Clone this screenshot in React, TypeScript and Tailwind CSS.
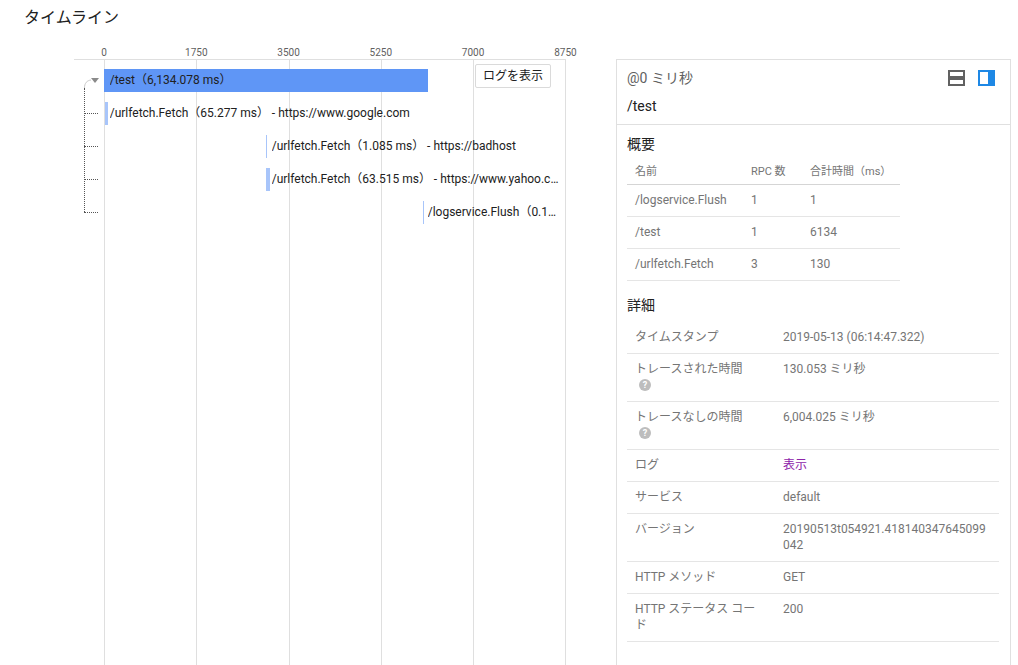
const font = "font-['Roboto','Noto_Sans_CJK_JP',sans-serif]";

const ticks = ["0", "1750", "3500", "5250", "7000", "8750"];

const spans = [
  { top: 69, left: 104, width: 324, bar: "bg-[#5f96f6]", labelLeft: 109.7, label: "/test（6,134.078 ms）", width2: 300 },
  { top: 102, left: 105, width: 3, bar: "bg-[#a8c5fa]", labelLeft: 109.7, label: "/urlfetch.Fetch（65.277 ms） - https://www.google.com", width2: 450 },
  { top: 135, left: 266, width: 1, bar: "bg-[#a8c5fa]", labelLeft: 271.7, label: "/urlfetch.Fetch（1.085 ms） - https://badhost", width2: 288 },
  { top: 168, left: 266, width: 4, bar: "bg-[#a8c5fa]", labelLeft: 271.7, label: "/urlfetch.Fetch（63.515 ms） - https://www.yahoo.com", width2: 290 },
  { top: 201, left: 423, width: 1, bar: "bg-[#a8c5fa]", labelLeft: 427.7, label: "/logservice.Flush（0.123 ms）", width2: 132 },
];

const summary = [
  ["/logservice.Flush", "1", "1"],
  ["/test", "1", "6134"],
  ["/urlfetch.Fetch", "3", "130"],
];

function Help() {
  return (
    <span className="my-[2px] ml-1 flex h-3 w-3 items-center justify-center rounded-full bg-[#bdbdbd] text-[9px] leading-none font-bold text-white">
      ?
    </span>
  );
}

function DetailRow({ name, help, children }: { name: string; help?: boolean; children: React.ReactNode }) {
  return (
    <div className="flex border-b border-[#e5e5e5] px-2 pt-[7px] pb-[8px] leading-4">
      <div className="w-[148px] pr-5 break-all text-[#757575]">
        {name}
        {help && <Help />}
      </div>
      <div className="w-[208px] break-all text-[#757575]">{children}</div>
    </div>
  );
}

export default function App() {
  return (
    <div className={`${font} relative h-[665px] w-[1018px] overflow-hidden bg-white text-xs text-[#212121]`}>
      <h1 className="pt-2 pl-6 text-base leading-5 text-[#212121]">タイムライン</h1>

      {/* Timeline chart */}
      <div className="absolute top-0 left-0 h-[665px] w-[600px]">
        {ticks.map((t, i) => (
          <div key={t}>
            <span className="absolute top-[47px] w-10 text-center text-[10px] leading-3 text-[#616161]" style={{ left: 84 + i * 92.28 }}>
              {t}
            </span>
            <div className="absolute top-[59px] bottom-0 w-px bg-[#dfdfdf]" style={{ left: 104 + i * 92.28 }} />
          </div>
        ))}
        <div className="absolute top-[59px] left-[74px] h-px w-[492px] bg-[#dfdfdf]" />

        {/* Tree connectors */}
        <div className="absolute top-[88px] left-[84px] h-[124px] w-px border-l border-dotted border-[#555]" />
        {[113, 146, 179, 212].map((y) => (
          <div key={y} className="absolute left-[84px] h-px w-[14px] border-t border-dotted border-[#555]" style={{ top: y }} />
        ))}
        <svg className="absolute top-[79px] left-[84px]" width="8" height="9" viewBox="0 0 8 9">
          <path d="M0.5 9C0.5 4 3 1.5 7 1" fill="none" stroke="#c8c8c8" />
        </svg>
        <div className="absolute top-[78px] left-[91px] h-0 w-0 border-x-[4px] border-t-[5px] border-x-transparent border-t-[#8a8a8a]" />

        {spans.map((s) => (
          <div key={s.label}>
            <div className={`absolute h-[23px] ${s.bar}`} style={{ top: s.top, left: s.left, width: s.width }} />
            <div
              className="absolute truncate leading-[23px] text-[#212121]"
              style={{ top: s.top, left: s.labelLeft, width: s.width2 }}
            >
              {s.label}
            </div>
          </div>
        ))}

        <button className="absolute top-[64px] left-[475px] h-[24px] w-[76px] rounded-[2px] border border-[#dadada] bg-white text-xs text-[#212121]">
          ログを表示
        </button>
      </div>

      {/* Detail panel */}
      <div className="absolute top-[59px] left-[616px] h-[620px] w-[395px] border border-[#e0e0e0] bg-white">
        <div className="flex h-[65px] justify-between border-b border-[#e0e0e0] pt-[10px] pr-[15px] pl-[10px]">
          <div>
            <div className="text-sm leading-[17px] text-[#616161]">@0 ミリ秒</div>
            <div className="mt-[11px] text-sm leading-[17px] text-[#212121]">/test</div>
          </div>
          <div className="flex gap-[13px] pt-0">
            <svg width="17" height="16" viewBox="0 0 17 16">
              <path d="M0 0h17v16H0z M2 2v4h13V2z M2 10v4h13v-4z" fill="#616161" fillRule="evenodd" />
            </svg>
            <svg width="17" height="16" viewBox="0 0 17 16">
              <path d="M0 0h17v16H0z M2 2v12h8V2z" fill="#1e88e5" fillRule="evenodd" />
            </svg>
          </div>
        </div>

        <div className="px-[10px]">
          <h2 className="mt-[11px] text-sm leading-[17px] text-[#212121]">概要</h2>
          <div className="mt-2 w-[273px]">
            <div className="flex h-6 items-center border-b border-[#d5d5d5] px-2 text-[11px] text-[#757575]">
              <div className="w-[116px]">名前</div>
              <div className="w-[59px]">RPC 数</div>
              <div>合計時間（ms）</div>
            </div>
            {summary.map((r) => (
              <div key={r[0]} className="flex h-8 items-center border-b border-[#e5e5e5] px-2 pb-[2px] text-[#757575]">
                <div className="w-[116px]">{r[0]}</div>
                <div className="w-[59px]">{r[1]}</div>
                <div>{r[2]}</div>
              </div>
            ))}
          </div>

          <h2 className="mt-4 text-sm leading-[17px] text-[#212121]">詳細</h2>
          <div className="mt-2 w-[372px]">
            <DetailRow name="タイムスタンプ">2019-05-13 (06:14:47.322)</DetailRow>
            <DetailRow name="トレースされた時間" help>130.053 ミリ秒</DetailRow>
            <DetailRow name="トレースなしの時間" help>6,004.025 ミリ秒</DetailRow>
            <DetailRow name="ログ"><span className="text-[#8e24aa]">表示</span></DetailRow>
            <DetailRow name="サービス">default</DetailRow>
            <DetailRow name="バージョン">20190513t054921.418140347645099042</DetailRow>
            <DetailRow name="HTTP メソッド">GET</DetailRow>
            <DetailRow name="HTTP ステータス コード">200</DetailRow>
          </div>
        </div>
      </div>
    </div>
  );
}
